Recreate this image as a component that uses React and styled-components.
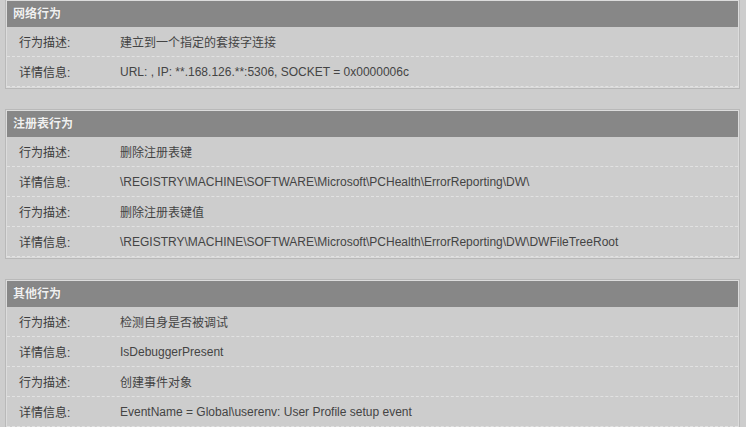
import styled, { createGlobalStyle } from "styled-components";

const GlobalStyle = createGlobalStyle`
  html, body {
    margin: 0;
    padding: 0;
    background: #cdcdcd;
  }
  body {
    font-family: "Liberation Sans", Arial, "Noto Sans CJK SC", sans-serif;
    font-size: 12px;
    color: #3a3a3a;
  }
`;

const Page = styled.div`
  width: 746px;
  height: 427px;
  overflow: hidden;
  padding: 0 6px 0 5px;
  box-sizing: border-box;
`;

const List = styled.div`
  display: flex;
  flex-direction: column;
  gap: 20px;
  margin-top: -1px;
`;

const Card = styled.section`
  border: 1px solid #b9b9b9;
  box-shadow: inset 0 0 0 1px #dcdcdc;
  padding: 1px;
`;

const Header = styled.div`
  height: 26px;
  line-height: 26px;
  background: #878787;
  color: #f0f0f0;
  font-weight: bold;
  padding-left: 6px;
  text-shadow: 0 0 1px #6a6a6a;
`;

const Row = styled.div`
  display: grid;
  grid-template-columns: 101px 1fr;
  height: 30px;
  align-items: center;
  padding-left: 12px;
  border-bottom: 1px dashed #e2e2e2;
  box-sizing: border-box;
`;

const Label = styled.span`
  color: #3c3c3c;
`;

const Value = styled.span`
  color: #444;
`;

const sections = [
  {
    title: "网络行为",
    rows: [
      ["行为描述:", "建立到一个指定的套接字连接"],
      ["详情信息:", "URL: , IP: **.168.126.**:5306, SOCKET = 0x0000006c"],
    ],
  },
  {
    title: "注册表行为",
    rows: [
      ["行为描述:", "删除注册表键"],
      ["详情信息:", "\\REGISTRY\\MACHINE\\SOFTWARE\\Microsoft\\PCHealth\\ErrorReporting\\DW\\"],
      ["行为描述:", "删除注册表键值"],
      ["详情信息:", "\\REGISTRY\\MACHINE\\SOFTWARE\\Microsoft\\PCHealth\\ErrorReporting\\DW\\DWFileTreeRoot"],
    ],
  },
  {
    title: "其他行为",
    rows: [
      ["行为描述:", "检测自身是否被调试"],
      ["详情信息:", "IsDebuggerPresent"],
      ["行为描述:", "创建事件对象"],
      ["详情信息:", "EventName = Global\\userenv: User Profile setup event"],
    ],
  },
];

const App = () => {
  return (
    <Page>
      <GlobalStyle />
      <List>
        {sections.map((s) => (
          <Card key={s.title}>
            <Header>{s.title}</Header>
            {s.rows.map((r, i) => (
              <Row key={i}>
                <Label>{r[0]}</Label>
                <Value>{r[1]}</Value>
              </Row>
            ))}
          </Card>
        ))}
      </List>
    </Page>
  );
};

export default App;
